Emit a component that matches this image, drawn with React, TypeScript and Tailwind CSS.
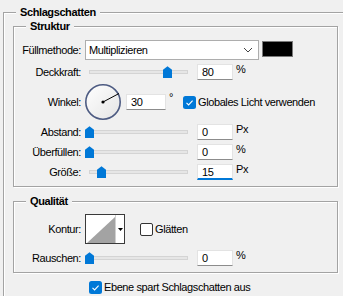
import type { ReactNode } from 'react'

const groupBox =
  'border border-[#a3a3a3] shadow-[1px_1px_0_#fff,inset_1px_1px_0_#fff]'

function Legend({ children }: { children: ReactNode }) {
  return (
    <legend className="ml-[12px] bg-[#f0f0f0] px-[4px] text-[11px] font-bold leading-[13px] tracking-[-0.4px]">
      {children}
    </legend>
  )
}

function Field({ value, active, width }: { value: string; active?: boolean; width: string }) {
  return (
    <div
      className={
        active
          ? `${width} h-[16px] border border-[#e3e3e3] border-b-2 border-b-[#0078d7] bg-white pl-[4px] leading-[14px]`
          : `${width} h-[16px] border border-[#e3e3e3] border-b-[#8c8c8c] bg-white pl-[4px] leading-[14px]`
      }
    >
      {value}
    </div>
  )
}

function Check({ checked }: { checked?: boolean }) {
  if (!checked) {
    return <div className="h-[13px] w-[13px] shrink-0 rounded-[2px] border border-[#333] bg-white" />
  }
  return (
    <svg width="13" height="13" viewBox="0 0 13 13" className="shrink-0">
      <rect x="0" y="0" width="13" height="13" rx="2.5" fill="#0078d7" />
      <polyline points="3.5,6.8 5.6,8.9 9.6,4.6" fill="none" stroke="#fff" strokeWidth="1.1" />
    </svg>
  )
}

function Slider({ pos }: { pos: number }) {
  return (
    <div className="relative ml-[8px] h-[16px] w-[99px]">
      <div className="absolute left-0 right-0 top-[6px] h-[4px] border border-[#d4d4d4] bg-[#e6e6e6]" />
      <svg className="absolute top-[2px]" style={{ left: pos }} width="9" height="12" viewBox="0 0 9 12">
        <path d="M4.5 0.3 L9 3.8 V12 H0 V3.8 Z" fill="#0078d7" />
      </svg>
    </div>
  )
}

function SliderRow({
  label,
  value,
  unit,
  pos,
  active,
}: {
  label: string
  value: string
  unit: string
  pos: number
  active?: boolean
}) {
  return (
    <div className="flex h-[16px] items-center">
      <span className="w-[67px] text-right">{label}</span>
      <Slider pos={pos} />
      <div className="ml-[9px]">
        <Field value={value} active={active} width="w-[36px]" />
      </div>
      <span className="ml-[3px] -mt-[1px] self-start leading-[13px]">{unit}</span>
    </div>
  )
}

function Dial() {
  return (
    <svg width="37" height="38" viewBox="0 0 37 38" className="ml-[4px]">
      <defs>
        <linearGradient id="dialFill" x1="0" y1="0" x2="1" y2="1">
          <stop offset="0" stopColor="#ffffff" />
          <stop offset="1" stopColor="#e4e4e4" />
        </linearGradient>
      </defs>
      <circle cx="18" cy="19" r="17.2" fill="url(#dialFill)" stroke="#4d5b82" strokeWidth="1.6" />
      <line x1="18" y1="19" x2="34" y2="10.5" stroke="#000" strokeWidth="1" />
      <circle cx="18" cy="19" r="1.6" fill="#000" />
    </svg>
  )
}

export default function App() {
  return (
    <div className="h-[296px] w-[343px] overflow-hidden bg-[#f0f0f0] pl-[3px] pt-[6px] font-['Liberation_Sans',Arial,sans-serif] text-[11px] tracking-[-0.4px] text-black">
      <fieldset className={`${groupBox} h-[400px] w-[400px]`}>
        <Legend>Schlagschatten</Legend>

        {/* Struktur */}
        <fieldset className={`${groupBox} ml-[9px] mt-[1px] w-[325px] pb-[6px]`}>
          <Legend>Struktur</Legend>

          <div className="mt-[7px] flex h-[20px] items-center">
            <span className="w-[67px] text-right">Füllmethode:</span>
            <div className="ml-[4px] flex h-[20px] w-[174px] items-center justify-between border border-[#adadad] bg-white pl-[3px] pr-[5px]">
              <span>Multiplizieren</span>
              <svg width="10" height="6" viewBox="0 0 10 6">
                <polyline points="1,1 5,5 9,1" fill="none" stroke="#444" strokeWidth="1" />
              </svg>
            </div>
            <div className="ml-[3px] -mt-[2px] h-[16px] w-[31px] border border-[#7a7a7a] bg-black" />
          </div>

          <div className="mt-[4px]">
            <SliderRow label="Deckkraft:" value="80" unit="%" pos={74} />
          </div>

          <div className="mt-[3px] flex h-[38px] items-center">
            <span className="w-[67px] text-right">Winkel:</span>
            <Dial />
            <div className="ml-[4px]">
              <Field value="30" width="w-[40px]" />
            </div>
            <span className="ml-[3px] -mt-[10px] leading-[13px]">°</span>
            <div className="ml-[10px] flex items-center gap-[2px]">
              <Check checked />
              <span>Globales Licht verwenden</span>
            </div>
          </div>

          <div className="mt-[3px] flex flex-col gap-[4px]">
            <SliderRow label="Abstand:" value="0" unit="Px" pos={-4} />
            <SliderRow label="Überfüllen:" value="0" unit="%" pos={-4} />
            <SliderRow label="Größe:" value="15" unit="Px" pos={8} active />
          </div>
        </fieldset>

        {/* Qualität */}
        <fieldset className={`${groupBox} ml-[9px] mt-[8px] w-[325px] pb-[6px]`}>
          <Legend>Qualität</Legend>

          <div className="mt-[6px] flex h-[30px] items-center">
            <span className="w-[67px] text-right">Kontur:</span>
            <div className="ml-[4px] flex h-[30px] w-[40px] border border-[#3a3a3a] bg-white">
              <svg width="29" height="28" viewBox="0 0 29 28">
                <polygon points="1,28 29,2 29,28" fill="#a3a3a3" />
              </svg>
              <div className="flex flex-1 items-center justify-center border-l border-[#d0d0d0]">
                <svg width="5" height="3" viewBox="0 0 5 3">
                  <polygon points="0,0 5,0 2.5,3" fill="#000" />
                </svg>
              </div>
            </div>
            <div className="ml-[15px] flex items-center gap-[2px]">
              <Check />
              <span>Glätten</span>
            </div>
          </div>

          <div className="mt-[6px]">
            <SliderRow label="Rauschen:" value="0" unit="%" pos={-4} />
          </div>
        </fieldset>

        <div className="ml-[85px] mt-[6px] flex items-center gap-[2px]">
          <Check checked />
          <span>Ebene spart Schlagschatten aus</span>
        </div>
      </fieldset>
    </div>
  )
}
